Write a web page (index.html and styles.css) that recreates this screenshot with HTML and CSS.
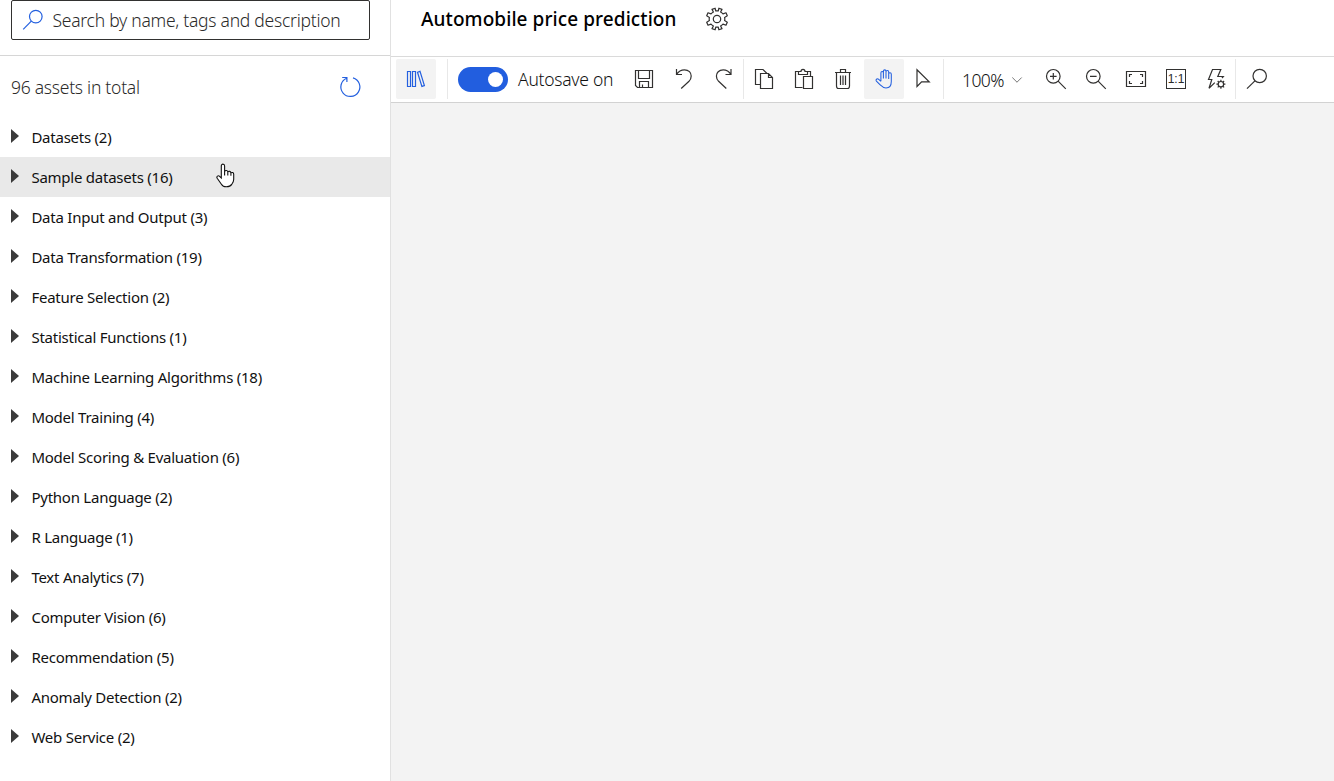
FILE: index.html
```html
<!DOCTYPE html>
<html lang="en">
<head>
<meta charset="utf-8">
<title>Automobile price prediction</title>
<link rel="stylesheet" href="styles.css">
</head>
<body>
<div class="app">
  <aside class="sidebar">
    <div class="search-area">
      <div class="search-box">
        <svg class="icon blue" viewBox="0 0 24 24"><circle cx="14.8" cy="8.6" r="6.3"/><path d="M10.3 13.2 2.2 21.3"/></svg>
        <span class="search-text">Search by name, tags and description</span>
      </div>
    </div>
    <div class="summary">
      <span class="summary-text">96 assets in total</span>
      <svg class="icon blue" viewBox="0 0 24 24"><path d="M15 2.8A9.5 9.5 0 1 1 8.6 3.2M4.2 2.5H8.9V7"/></svg>
    </div>
    <ul class="tree">
      <li class="node"><i class="caret"></i><span>Datasets (2)</span></li>
      <li class="node hovered"><i class="caret"></i><span>Sample datasets (16)</span>
        <svg class="cursor" viewBox="0 0 20 26"><path d="M5.3 15V3.1C5.3.5 8.6.5 8.6 3.1V8.6C9.4 6.9 11.8 7.4 11.8 9.1 12.7 7.7 14.9 8.3 14.9 10 15.9 8.9 17.7 9.6 17.7 11.3V16.5C17.7 18.7 16.5 20.2 15.7 21.4 14.6 23.2 12.3 23.8 10.3 23.8 8 23.8 6.4 22.9 5.4 21.2L1.2 15.3C.1 13.5 2.3 12 3.6 13.3ZM8.6 8.5V12.5M11.8 9V12.5M14.9 10V12.8"/></svg>
      </li>
      <li class="node"><i class="caret"></i><span>Data Input and Output (3)</span></li>
      <li class="node"><i class="caret"></i><span>Data Transformation (19)</span></li>
      <li class="node"><i class="caret"></i><span>Feature Selection (2)</span></li>
      <li class="node"><i class="caret"></i><span>Statistical Functions (1)</span></li>
      <li class="node"><i class="caret"></i><span>Machine Learning Algorithms (18)</span></li>
      <li class="node"><i class="caret"></i><span>Model Training (4)</span></li>
      <li class="node"><i class="caret"></i><span>Model Scoring &amp; Evaluation (6)</span></li>
      <li class="node"><i class="caret"></i><span>Python Language (2)</span></li>
      <li class="node"><i class="caret"></i><span>R Language (1)</span></li>
      <li class="node"><i class="caret"></i><span>Text Analytics (7)</span></li>
      <li class="node"><i class="caret"></i><span>Computer Vision (6)</span></li>
      <li class="node"><i class="caret"></i><span>Recommendation (5)</span></li>
      <li class="node"><i class="caret"></i><span>Anomaly Detection (2)</span></li>
      <li class="node"><i class="caret"></i><span>Web Service (2)</span></li>
    </ul>
  </aside>
  <main class="main">
    <header class="header">
      <h1 class="title">Automobile price prediction</h1>
      <svg class="icon" viewBox="0 0 24 24"><circle cx="12" cy="12" r="3.7"/><path stroke-linejoin="round" d="M10.1 1.2 10.8 4Q12 3.7 13.2 4L13.9 1.2 17 2.4 15.6 5Q17 5.8 18 6.9L21 5.8 22.3 8.8 19.6 10.4Q20.1 12 19.6 13.6L22.3 15.2 21 18.2 18 17.1Q17 18.2 15.6 19L17 21.6 13.9 22.8 13.2 20Q12 20.3 10.8 20L10.1 22.8 7 21.6 8.4 19Q7 18.2 6 17.1L3 18.2 1.7 15.2 4.4 13.6Q3.9 12 4.4 10.4L1.7 8.8 3 5.8 6 6.9Q7 5.8 8.4 5L7 2.4Z"/></svg>
    </header>
    <div class="toolbar">
      <div class="tool active"><svg class="icon blue" viewBox="0 0 24 24"><path d="M3.5 4.5H6.5V19.5H3.5ZM8.5 4.5H11.5V19.5H8.5ZM13.5 5.3 16 4.4 20.4 18.6 17.9 19.4Z"/></svg></div>
      <i class="sep wide"></i>
      <div class="toggle"><i class="knob"></i></div>
      <span class="autosave">Autosave on</span>
      <div class="tool"><svg class="icon" viewBox="0 0 24 24"><path d="M3.5 3.5H20.5V20.5H5.5L3.5 18.5ZM6.5 3.5V11.5H17.5V3.5M7.5 20.5V14.5H16.5V20.5M10.5 20.5V17.5"/></svg></div>
      <div class="tool"><svg class="icon" viewBox="0 0 24 24"><path d="M4.5 2V7.5H10M4.5 7.5C6.5 4.3 9.3 2.8 12.5 2.8 16.8 2.8 19.2 5.8 19.2 9 19.2 11.2 18.4 12.9 17 14.3L9.2 21.5"/></svg></div>
      <div class="tool"><svg class="icon" viewBox="0 0 24 24"><path d="M19 2V7.5H13.5M19 7.5C17 4.3 14.2 2.8 11.2 2.8 6.9 2.8 4.4 5.8 4.4 9 4.4 11.2 5.2 12.9 6.6 14.3L14.3 21.5"/></svg></div>
      <i class="sep"></i>
      <div class="tool"><svg class="icon" viewBox="0 0 24 24"><path d="M8.5 17.5H3.5V2.5H11L15 6.5M8.5 6.5H16.5L20.5 10.5V21.5H8.5ZM16.5 6.5V10.5H20.5"/></svg></div>
      <div class="tool"><svg class="icon" viewBox="0 0 24 24"><path d="M10.5 20.5H3.5V4.5H7.5M14.5 4.5H18.5V9.5M6.5 7.5V4.5H9C9 1.6 13 1.6 13 4.5H15.5V7.5ZM11.5 9.5H20.5V21.5H11.5Z"/></svg></div>
      <div class="tool"><svg class="icon" viewBox="0 0 24 24"><path d="M3 5.5H19M8.5 5.5V2.5H13.5V5.5M4.5 5.5V19C4.5 20.5 5 21.5 6.5 21.5H15.5C17 21.5 17.5 20.5 17.5 19V5.5M8.5 8.5V18M11 8.5V18M13.5 8.5V18"/></svg></div>
      <div class="tool active"><svg class="icon blue hand" viewBox="0 0 24 24"><g transform="translate(1.4 .4)"><path d="M7.5 13.8V5.5C7.5 3.7 10 3.7 10 5.5V11M10 5.5V3.8C10 2 12.6 2 12.6 3.8V11M12.6 4.4C12.6 2.7 15.3 2.7 15.3 4.5V11.5M15.3 6.7C15.3 5 17.9 5 17.9 6.9V14C17.9 18 16 20.5 12.6 20.5 9.8 20.5 8.3 19.1 6.5 17.3L3 13.8C1.8 12.3 3.7 10.8 5.1 11.8L7.5 14"/></g></svg></div>
      <div class="tool"><svg class="icon" viewBox="0 0 24 24"><path d="M5 2.8V19.5L9.6 14.8H17.2Z"/></svg></div>
      <i class="sep"></i>
      <div class="zoom-level"><span>100%</span><svg class="chevron" viewBox="0 0 12 8"><path d="M1.3 1.5 6 6.2 10.7 1.5"/></svg></div>
      <div class="tool"><svg class="icon" viewBox="0 0 24 24"><circle cx="9.3" cy="9.3" r="6.8"/><path d="M14.1 14.1 21.8 21.8M6 9.3H12.6M9.3 6V12.6"/></svg></div>
      <div class="tool"><svg class="icon" viewBox="0 0 24 24"><circle cx="9.3" cy="9.3" r="6.8"/><path d="M14.1 14.1 21.8 21.8M6 9.3H12.6"/></svg></div>
      <div class="tool"><svg class="icon" viewBox="0 0 24 24"><path d="M2.5 4.5H21.5V19.5H2.5ZM5.5 10V7.5H8M16 7.5H18.5V10M18.5 14V16.5H16M8 16.5H5.5V14"/></svg></div>
      <div class="tool"><span class="ratio">1:1</span></div>
      <div class="tool"><svg class="icon" viewBox="0 0 24 24"><path d="M18 11 19.3 9.5H13.8L16.8 2.5H8.5L4.5 12.5H7.8L5 21.2 10.8 15.6"/><circle cx="16.9" cy="17.2" r="2.7"/><path d="M16.9 12.7V14.5M16.9 19.9V21.7M12.4 17.2H14.2M19.6 17.2H21.4M13.7 14 15 15.3M18.8 19.1 20.1 20.4M20.1 14 18.8 15.3M15 19.1 13.7 20.4"/></svg></div>
      <i class="sep"></i>
      <div class="tool"><svg class="icon" viewBox="0 0 24 24"><circle cx="15.7" cy="9" r="6.7"/><path d="M10.9 13.8 3 21.7"/></svg></div>
    </div>
    <section class="canvas"></section>
  </main>
</div>
</body>
</html>
```
FILE: styles.css
```css
* { box-sizing: border-box; }
body {
  margin: 0;
  overflow: hidden;
  background: #fff;
  color: #2b2a29;
  font-family: "Noto Sans", "Open Sans", sans-serif;
}
.app { display: flex; width: 100%; height: 781px; }
.sidebar { width: 391px; flex: none; border-right: 1px solid #e1e1e1; }
.search-area { height: 56px; padding: 0 20px 0 11px; border-bottom: 1px solid #d6d6d6; }
.search-box {
  display: flex;
  align-items: center;
  height: 40px;
  padding-left: 9px;
  border: 1px solid #323130;
  border-radius: 2px;
}
.icon {
  display: block;
  width: 24px;
  height: 24px;
  flex: none;
  fill: none;
  stroke: #323130;
  stroke-width: 1.2;
}
.icon.blue { stroke: #2460df; }
.icon.hand { stroke-width: 1.05; }
.search-text,
.summary-text,
.autosave {
  font-size: 17.5px;
  font-weight: 360;
  letter-spacing: -0.26px;
  white-space: nowrap;
}
.search-text { margin-left: 7.5px; }
.summary {
  display: flex;
  align-items: center;
  justify-content: space-between;
  height: 61px;
  padding: 0 28px 0 11px;
}
.tree { margin: 0; padding: 0; list-style: none; }
.node {
  display: flex;
  align-items: center;
  height: 40px;
  padding: 0 0 2px 11px;
  color: #111;
  font-size: 15px;
  font-weight: 450;
  letter-spacing: -0.24px;
  white-space: nowrap;
}
.node span { padding-top: 1px; }
.hovered { background: #e9e9e9; }
.caret {
  width: 8px;
  height: 14px;
  margin-right: 12.4px;
  background: #3a3a3a;
  clip-path: polygon(0 0, 100% 50%, 0 100%);
}
.cursor {
  width: 20px;
  height: 26px;
  margin: -1px 0 0 43px;
  fill: #fff;
  stroke: #111;
  stroke-width: 1.1;
}
.main { display: flex; flex-direction: column; flex: 1; min-width: 0; }
.header { display: flex; align-items: center; height: 56px; padding: 0 0 18px 30px; }
.title {
  width: 255px;
  margin: 0 29px 0 0;
  color: #000;
  font-size: 19px;
  font-weight: 550;
  letter-spacing: 0.08px;
  white-space: nowrap;
}
.toolbar {
  display: flex;
  align-items: center;
  flex: none;
  height: 47px;
  padding: 0 0 1px 5px;
  border-top: 1px solid #dadada;
  border-bottom: 1px solid #d2d2d2;
}
.tool {
  display: flex;
  align-items: center;
  justify-content: center;
  width: 40px;
  height: 40px;
  flex: none;
}
.active { background: #f3f3f3; border-radius: 2px; }
.sep { width: 1px; height: 40px; flex: none; margin-left: -1px; background: #e8e8e8; }
.sep.wide { margin: 0 10px 0 11px; }
.toggle {
  display: flex;
  align-items: center;
  justify-content: flex-end;
  width: 50px;
  height: 25px;
  flex: none;
  padding-right: 5px;
  border-radius: 13px;
  background: #225edf;
}
.knob { width: 15px; height: 15px; border-radius: 50%; background: #fff; }
.autosave { width: 106px; margin-left: 10px; color: #111; }
.zoom-level {
  display: flex;
  align-items: center;
  justify-content: space-between;
  width: 92px;
  flex: none;
  padding: 1px 13px 0 18px;
  color: #111;
  font-size: 17.5px;
  font-weight: 360;
  letter-spacing: -0.6px;
}
.chevron { width: 12px; height: 8px; fill: none; stroke: #777; }
.ratio {
  width: 20px;
  height: 20px;
  border: 1px solid #323130;
  font: 12px/18px "Liberation Sans", sans-serif;
  text-align: center;
}
.canvas { flex: 1; background: #f3f3f3; }
```
